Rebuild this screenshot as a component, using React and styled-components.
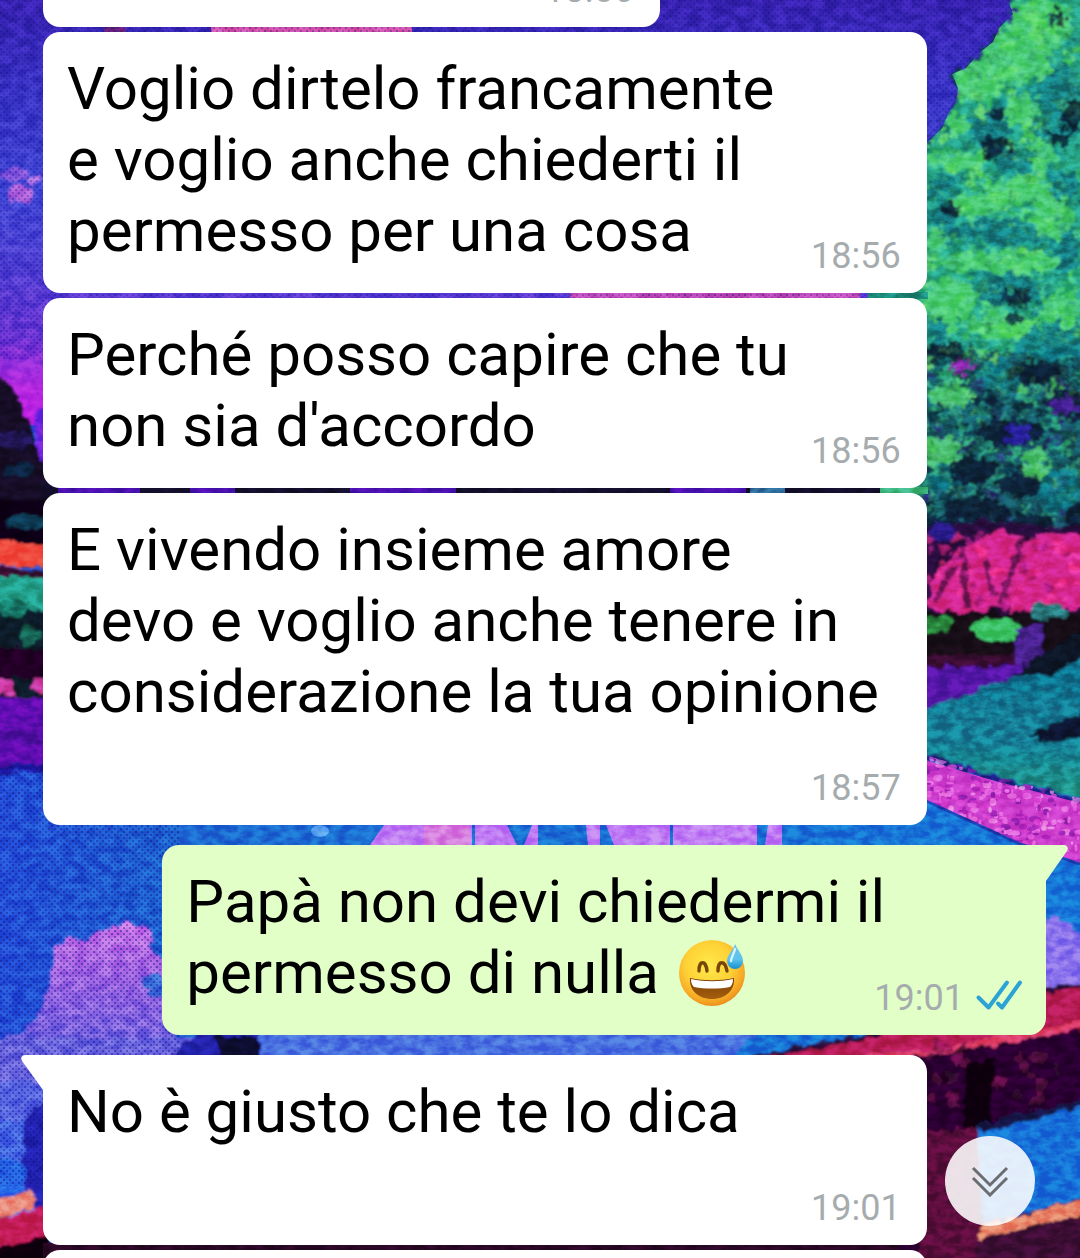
import React from 'react';
import styled, { createGlobalStyle, css } from 'styled-components';

const GlobalStyle = createGlobalStyle`
  * {
    box-sizing: border-box;
  }

  body {
    margin: 0;
    background: #1668d0;
    font-family: Roboto, 'Noto Sans', sans-serif;
  }
`;

const Screen = styled.main`
  position: relative;
  height: 100vh;
  overflow: hidden;
`;

const WallpaperSvg = styled.svg`
  position: absolute;
  inset: 0;
  width: 100%;
  height: 100%;

  .grain {
    mix-blend-mode: overlay;
  }
`;

const Thread = styled.div`
  position: relative;
  display: flex;
  flex-direction: column;
  padding: 0 34px 0 43px;
`;

const Group = styled.div`
  display: flex;
  flex-direction: column;
  gap: 5px;
  margin-bottom: 20px;
`;

// the oldest message is scrolled almost out of view
const ScrolledOut = styled.div`
  display: flex;
  align-items: flex-end;
  height: 27px;
  overflow: hidden;
`;

const Bubble = styled.article`
  position: relative;
  display: grid;
  width: ${({ $short }) => ($short ? '61.5%' : '88.1%')};
  min-height: 119px;
  padding: 21px 26px 16px 24px;
  border-radius: 17px;
  background: #ffffff;

  ${({ $sent }) =>
    $sent &&
    css`
      align-self: flex-end;
      background: #e1ffc7;
    `}

  ${({ $tail, $sent }) =>
    $tail && ($sent ? 'border-top-right-radius: 0;' : 'border-top-left-radius: 0;')}
`;

const Body = styled.p`
  grid-area: 1 / 1;
  justify-self: start;
  margin: 0;
  padding-bottom: 11px;
  font-size: 60px;
  line-height: 71px;
  color: #000000;
`;

const Line = styled.span`
  display: block;
`;

const Meta = styled.div`
  grid-area: ${({ $below }) => ($below ? '2 / 1' : '1 / 1')};
  display: flex;
  align-items: flex-end;
  align-self: end;
  justify-self: end;
  gap: 10px;
  height: ${({ $below }) => ($below ? '71px' : 'auto')};
  font-size: 36px;
  line-height: 42px;
  color: #a6acae;
`;

const Tail = styled.svg`
  position: absolute;
  top: 0;
  width: 23px;
  height: 36px;
  fill: ${({ $sent }) => ($sent ? '#e1ffc7' : '#ffffff')};
  ${({ $sent }) => ($sent ? 'left: calc(100% - 1px);' : 'right: calc(100% - 1px);')}
`;

const Ticks = styled.svg`
  width: 46px;
  height: 42px;
  overflow: visible;
`;

const EmojiSvg = styled.svg`
  width: 67px;
  height: 67px;
  margin-left: 5px;
  vertical-align: -13px;
`;

const ScrollButton = styled.button`
  position: absolute;
  right: 45px;
  bottom: 32px;
  display: flex;
  align-items: center;
  justify-content: center;
  width: 90px;
  height: 90px;
  padding: 0;
  border: none;
  border-radius: 50%;
  background: rgba(255, 255, 255, 0.88);
  cursor: pointer;
`;

const seeded = (seed) => {
  let s = seed;
  return () => {
    s = (s * 16807) % 2147483647;
    return s / 2147483647;
  };
};

// small leaves scattered over an area
const scatter = (seed, count, [x, y, w, h], colors, min, max) => {
  const rnd = seeded(seed);
  return Array.from({ length: count }, (_, i) => ({
    id: i,
    cx: Math.round(x + rnd() * w),
    cy: Math.round(y + rnd() * h),
    rx: min + rnd() * (max - min),
    ry: min + rnd() * (max - min) * 0.7,
    fill: colors[Math.floor(rnd() * colors.length)],
  }));
};

const Specks = ({ items, opacity = 0.7 }) => (
  <g opacity={opacity}>
    {items.map(({ id, ...rest }) => (
      <ellipse key={id} {...rest} />
    ))}
  </g>
);

const upperLeaves = scatter(71, 620, [915, 0, 165, 400], ['#5fe36c', '#3fc878', '#1f9c86', '#2bb482', '#78e860', '#12747f'], 2, 7);
const fineLeaves = scatter(83, 900, [915, 0, 165, 530], ['#86f070', '#3fc878', '#0f5a70', '#2bb482', '#128078', '#0c4058'], 1, 4);
const lowerLeaves = scatter(19, 330, [915, 370, 165, 160], ['#2aa884', '#123c50', '#0b2338', '#3fc07c', '#1c7a80', '#2a2078'], 2, 7);
const pathPetals = scatter(33, 420, [920, 755, 160, 110], ['#f078e8', '#a81cb8', '#e048d8', '#8c1cb0', '#f49ae8'], 1, 5);
const pinkPetals = scatter(45, 90, [927, 535, 153, 75], ['#ff3a9c', '#d82488', '#a01c78', '#f0309a'], 2, 6);
const darkSpecks = scatter(57, 70, [927, 1045, 130, 213], ['#6a1048', '#3a0830', '#12040e', '#8a1458'], 3, 10);

const brights = [
  [1040, 25, 32, 28], [1020, 60, 34, 24], [978, 80, 24, 20], [1000, 48, 22, 14], [1022, 110, 18, 18],
  [957, 125, 12, 10], [1042, 158, 10, 20], [955, 160, 28, 10], [1020, 192, 34, 13], [975, 205, 26, 12],
  [1052, 218, 20, 22], [988, 262, 48, 12], [1040, 262, 20, 10], [950, 300, 26, 24], [1000, 326, 34, 14],
  [1060, 308, 20, 16], [935, 240, 12, 12], [950, 395, 24, 12], [940, 450, 20, 16], [1035, 465, 12, 18],
];
const teals = [
  [1058, 105, 30, 40], [990, 130, 22, 16], [1015, 160, 18, 14], [945, 190, 18, 14], [1062, 190, 18, 20],
  [1000, 232, 44, 14], [942, 225, 16, 20], [1010, 290, 36, 16], [1066, 250, 14, 22], [1052, 345, 34, 22],
  [935, 325, 12, 16], [1000, 375, 24, 14], [1060, 490, 22, 22], [945, 480, 20, 10],
];
const darks = [
  [1057, 18, 8, 9], [1074, 116, 12, 16], [1060, 138, 12, 8], [997, 115, 8, 7], [995, 148, 14, 12],
  [952, 210, 9, 8], [1018, 298, 16, 9], [1014, 318, 7, 9], [940, 352, 30, 10], [1040, 372, 34, 12],
  [984, 398, 12, 7], [1068, 402, 22, 16], [1010, 432, 34, 14], [972, 470, 24, 14], [1020, 486, 24, 12],
  [975, 510, 34, 14], [1025, 522, 30, 8], [1076, 520, 12, 18], [940, 530, 18, 14],
];

const Blobs = ({ items, fill, opacity }) => (
  <g fill={fill} opacity={opacity}>
    {items.map(([cx, cy, rx, ry]) => (
      <ellipse key={`${cx}-${cy}`} cx={cx} cy={cy} rx={rx} ry={ry} />
    ))}
  </g>
);

const Wallpaper = () => (
  <WallpaperSvg viewBox="0 0 1080 1258" preserveAspectRatio="xMidYMid slice" aria-hidden="true">
    <defs>
      <linearGradient id="sky" x1="0" y1="0" x2="0" y2="1">
        <stop offset="0" stopColor="#3a22b4" />
        <stop offset="0.2" stopColor="#3a32c6" />
        <stop offset="0.45" stopColor="#4147d8" />
        <stop offset="0.62" stopColor="#5140d6" />
        <stop offset="0.78" stopColor="#6a34d6" />
        <stop offset="0.9" stopColor="#b428e0" />
        <stop offset="1" stopColor="#c81ee8" />
      </linearGradient>
      <linearGradient id="water" x1="0" y1="0" x2="1" y2="0">
        <stop offset="0" stopColor="#2450dc" />
        <stop offset="0.2" stopColor="#1c6ad2" />
        <stop offset="1" stopColor="#1676d8" />
      </linearGradient>
      <linearGradient id="mountain" x1="0" y1="0" x2="0" y2="1">
        <stop offset="0" stopColor="#cf74ea" />
        <stop offset="0.4" stopColor="#a266e6" />
        <stop offset="1" stopColor="#6a66e4" />
      </linearGradient>
      <linearGradient id="field" x1="0" y1="0" x2="0" y2="1">
        <stop offset="0" stopColor="#11708e" />
        <stop offset="0.6" stopColor="#127f98" />
        <stop offset="1" stopColor="#249886" />
      </linearGradient>
      <pattern id="dither" width="6" height="6" patternUnits="userSpaceOnUse">
        <rect width="2" height="2" fill="#10107c" />
        <rect x="3" y="3" width="2" height="2" fill="#10107c" />
      </pattern>
      <clipPath id="tree">
        <path d="M1008 0l5 14-14 14-6 14-15 12-12 14-14 6 6 14-2 14-8 12-6 14-12 12-15 10v394h168V0z" />
      </clipPath>
      <clipPath id="path">
        <path d="M915 752l80 24 85 22v66l-60-20-105-48z" />
      </clipPath>
      <filter id="rough" x="-5%" y="-5%" width="110%" height="110%">
        <feTurbulence type="fractalNoise" baseFrequency="0.13" numOctaves="4" seed="4" />
        <feDisplacementMap in="SourceGraphic" scale="24" xChannelSelector="R" yChannelSelector="G" />
        <feGaussianBlur stdDeviation="1" />
      </filter>
      <filter id="soft" x="-5%" y="-5%" width="110%" height="110%">
        <feTurbulence type="fractalNoise" baseFrequency="0.09" numOctaves="3" seed="9" />
        <feDisplacementMap in="SourceGraphic" scale="12" xChannelSelector="R" yChannelSelector="G" />
        <feGaussianBlur stdDeviation="1.3" />
      </filter>
      <filter id="noise" x="0" y="0" width="100%" height="100%" colorInterpolationFilters="sRGB">
        <feTurbulence type="fractalNoise" baseFrequency="0.08 0.13" numOctaves="4" seed="12" />
        <feColorMatrix values="2.6 0 0 0 -0.82  2.6 0 0 0 -0.82  2.6 0 0 0 -0.82  0 0 0 0 1" />
      </filter>
    </defs>

    <rect width="1080" height="430" fill="url(#sky)" />
    <rect y="425" width="1080" height="833" fill="url(#water)" />

    {/* clouds and far shore */}
    <path d="M211 24h201v10H211z" fill="#d452ae" />
    <path d="M104 26h22v6h-22z" fill="#6a2080" />
    <path d="M570 290h290v12H570z" fill="#c24cbc" />
    <g filter="url(#soft)">
      <ellipse cx="12" cy="174" rx="15" ry="7" fill="#8a58e0" />
      <ellipse cx="20" cy="194" rx="13" ry="9" fill="#b060dc" />
      <ellipse cx="34" cy="180" rx="8" ry="3" fill="#b070e8" />
      <path d="M36 410h20v70H36z" fill="#7024e0" />
      <path d="M-8 374l14 6 12 16 10 24 8 26 14 30v64H-8z" fill="#120a26" />
      <ellipse cx="12" cy="440" rx="20" ry="9" fill="#241858" />
      <ellipse cx="20" cy="470" rx="16" ry="7" fill="#0c2844" />
    </g>
    <path d="M43 484h884v14H43z" fill="#120e2c" />
    <path d="M58 484h82v14H58zM190 484h45v14h-45zM350 484h106v14H350zM670 484h76v14h-76z" fill="#4a10b0" />
    <path d="M750 484h35v14h-35z" fill="#2c6898" />

    {/* left bank */}
    <g filter="url(#soft)">
      <path d="M-8 500h70v60H-8z" fill="#0a0616" />
      <ellipse cx="26" cy="522" rx="20" ry="7" fill="#103c58" />
      <path d="M-8 540l60 5v24l-60-4z" fill="#f04a3c" />
      <path d="M-8 566l60 6v8l-60-4z" fill="#3a1030" />
      <path d="M-8 574l60 6v44l-60-8z" fill="#22a08c" />
      <path d="M-8 606l60 6v92H-8z" fill="#0c1c2a" />
      <ellipse cx="14" cy="608" rx="16" ry="9" fill="#187868" />
      <ellipse cx="30" cy="636" rx="11" ry="9" fill="#186858" />
      <path d="M-8 648h60v30H-8z" fill="#220626" />
      <path d="M-8 679l22 2v14l-22-3zM34 678h18v14l-20-2z" fill="#d03ca8" />
      <path d="M-8 697h60v68l-60 6z" fill="#6410b4" />
      <path d="M-8 730h60v14H-8z" fill="#500ca0" />
      <path d="M-8 766l60-4v8l-60 4z" fill="#1e18a0" />
    </g>

    {/* reflections on the water */}
    <g fill="#bf7af4">
      <path d="M384 825h88v20H370zM475 825h32l10 20h-42zM532 825h6v20h-14zM586 825h14v20h-12zM606 825h64v20h-56zM673 825h84v20h-84zM768 825h14v20h-17z" />
    </g>
    <path d="M424 825h46v20h-46z" fill="#d67adf" />
    <ellipse cx="320" cy="831" rx="9" ry="6" fill="#5aa4f0" />

    <g filter="url(#soft)">
      <path d="M-8 1037l30-4 18-20 8-30 7-36 14-10 12 6 22-15 22-6 24 6 6 26 20 20v90H-8z" fill="url(#mountain)" />
      <path d="M140 980l14-10 14 16v16l-20-6z" fill="#3a6edc" />
      <path d="M-8 1037h230v50H-8z" fill="#6c66e2" />
      <path d="M-8 1082h60v60H-8z" fill="#5a68e6" />
      <path d="M-8 1120h60v100H-8z" fill="#4468e8" />
      <path d="M-8 1160h34v50H-8z" fill="#2868e8" />
      <path d="M170 1060l12-16 24-14h54v30z" fill="#2420ac" />
      <path d="M214 1036h44v24h-38z" fill="#0a0830" />
      <path d="M260 1030h500l-30 30H260z" fill="#4870e0" />
      <path d="M50 1096l-16 12-10 22-2 26 6 36 8 24 16 8z" fill="#2424b4" />
      <path d="M-8 1200l40-10 3 18-43 10z" fill="#eb8878" />
      <path d="M-8 1218l60-10v34l-60 8z" fill="#c41c58" />
      <path d="M-8 1250l60-16v30H-8z" fill="#10040e" />
    </g>
    <path d="M43 1243h884v15H43z" fill="#2a0826" />

    {/* dithering of the sky and the water */}
    <rect width="1080" height="360" fill="url(#dither)" opacity="0.28" />
    <rect y="766" width="180" height="420" fill="url(#dither)" opacity="0.4" />

    {/* tree */}
    <path d="M1008 0l5 14-14 14-6 14-15 12-12 14-14 6 6 14-2 14-8 12-6 14-12 12-15 10v394h168V0z" fill="#123a66" filter="url(#rough)" />
    <g clipPath="url(#tree)">
      <g filter="url(#rough)">
        <path d="M1014-18v32l-14 14-6 14-15 12-12 14-14 6 6 14-2 14-8 12-6 14-12 12-22 10v440h200V-18z" fill="#25a488" />
        <path d="M905 350h195v200H905z" fill="#165a68" />
        <Specks items={upperLeaves} opacity={0.7} />
        <Specks items={lowerLeaves} opacity={0.8} />
        <Blobs items={teals} fill="#117684" opacity={0.8} />
        <Blobs items={brights} fill="#56d870" opacity={0.8} />
        <Specks items={fineLeaves} opacity={0.4} />
        <Blobs items={darks} fill="#0c1830" opacity={0.85} />
        <Specks items={upperLeaves} opacity={0.2} />
        <ellipse cx="962" cy="366" rx="9" ry="8" fill="#8a28b0" />
        <ellipse cx="1064" cy="406" rx="13" ry="8" fill="#4a209c" />
        <ellipse cx="1018" cy="434" rx="13" ry="9" fill="#2c20a4" />
      </g>
    </g>
    <path d="M868 292h60v7h-60z" fill="#1c8c7c" />
    <path d="M880 487h48v7h-48z" fill="#3cb47c" />

    {/* right bank */}
    <g filter="url(#soft)">
      <path d="M920 528l60-8 110 8v140H920z" fill="#2c1040" />
      <ellipse cx="942" cy="532" rx="14" ry="9" fill="#2a1c90" />
      <path d="M927 606l8-32 22-24 30-16 18-6 16 16 14-10h54v74l-60 4-30-4-40 8z" fill="#d4288c" />
      <Specks items={pinkPetals} opacity={0.7} />
      <path d="M1022 538l-8 30-14 34M962 548l6 60M985 560l8 36M935 600l20-34" stroke="#5c104e" strokeWidth="6" fill="none" opacity="0.8" />
      <path d="M920 612h170v54H920z" fill="#120a16" />
      <path d="M920 655h100v12H920z" fill="#3c1034" />
      <ellipse cx="996" cy="629" rx="24" ry="12" fill="#3cc468" />
      <ellipse cx="935" cy="624" rx="18" ry="9" fill="#2c8c40" />
      <ellipse cx="1048" cy="612" rx="18" ry="9" fill="#2c7c80" />
      <path d="M1016 630l26-8v46l-26 4z" fill="#4a2090" />
      <path d="M920 668l108-3-28 22-80 24z" fill="#5414a8" />
      <path d="M920 712l90-34 50-10 30-18v150l-170-44z" fill="url(#field)" />
      <path d="M1010 676l38-26 42-22v24l-40 22z" fill="#0c1428" />
      <path d="M1030 736l30-16 30-8v26l-44 6z" fill="#0a1430" />
      <path d="M920 750l78 26 92 26v8l-92-26-78-26z" fill="#1c1c80" />
    </g>
    <g clipPath="url(#path)">
      <path d="M915 757l80 24 85 22v70H915z" fill="#cc3ccc" />
      <Specks items={pathPetals} opacity={0.7} />
    </g>
    <path d="M924 800l96 44 60 20" stroke="#1c3cb0" strokeWidth="3" fill="none" />
    <g filter="url(#soft)">
      <path d="M1040 916l20 2 30 22v44l-50 10z" fill="#8870ec" />
      <path d="M740 1062l120-24 180-46 50-12v60l-170 24z" fill="#b81c56" />
      <path d="M730 1062l150-28 160-43 50-8" stroke="#2c0c3c" strokeWidth="4" fill="none" />
      <path d="M800 1062l140-14 150-30v8l-140 34z" fill="#e0406c" />
      <path d="M900 1060l190-31v240H900z" fill="#2a0630" />
      <Specks items={darkSpecks} opacity={0.6} />
      <path d="M966 1064l30-6-6 66-28 12z" fill="#0a040c" />
      <path d="M920 1130h60v140h-60z" fill="#5c103e" />
      <path d="M978 1128l112-28v96l-108 28z" fill="#1470d8" />
      <path d="M978 1124l112-26v6l-110 28z" fill="#141448" />
      <path d="M980 1226l110-28v14l-112 28z" fill="#e88468" />
      <path d="M976 1240l114-28v60H976z" fill="#3c0c34" />
    </g>

    <rect className="grain" width="1080" height="1258" filter="url(#noise)" opacity="0.22" />
  </WallpaperSvg>
);

const SweatEmoji = () => (
  <EmojiSvg viewBox="0 0 67 67" role="img" aria-label="😅">
    <defs>
      <radialGradient id="face" cx="0.45" cy="0.38" r="0.64">
        <stop offset="0" stopColor="#ffe94a" />
        <stop offset="0.55" stopColor="#fed136" />
        <stop offset="0.85" stopColor="#f6a724" />
        <stop offset="1" stopColor="#e98b1c" />
      </radialGradient>
      <linearGradient id="drop" x1="0" y1="0" x2="0" y2="1">
        <stop offset="0" stopColor="#6cc0e6" />
        <stop offset="0.6" stopColor="#5cc4ee" />
        <stop offset="1" stopColor="#168fd2" />
      </linearGradient>
      <linearGradient id="mouth" x1="0" y1="0" x2="0" y2="1">
        <stop offset="0" stopColor="#7c3c08" />
        <stop offset="1" stopColor="#a4600c" />
      </linearGradient>
    </defs>
    <circle cx="33" cy="34" r="33" fill="url(#face)" />
    <path d="M20 32c0-11 7-11 8 0M39 32c0-11 7-11 9 0" fill="none" stroke="#7a4508" strokeWidth="3.4" strokeLinecap="round" />
    <path d="M11 39c14 3 30 3 44 0 1 12-8 21-22 21S10 51 11 39z" fill="url(#mouth)" />
    <path d="M12 40c14 3 28 3 42 0 0 4-1 6-3 8-11 2-25 2-36 0-2-2-3-4-3-8z" fill="#ffffff" />
    <path d="M56 5c3 7 8 11 8 17a8 8 0 0 1-16 0c0-6 6-10 8-17z" fill="url(#drop)" />
    <path d="M56 10c-1 5-4 8-4 12" stroke="#d4f4ff" strokeWidth="2.4" strokeLinecap="round" fill="none" />
  </EmojiSvg>
);

const ReadTicks = () => (
  <Ticks viewBox="0 0 46 42" role="img" aria-label="Letto">
    <path d="M4.5 20.5l10 10L33 5.5M24 26.5l4 4L46 5.5" fill="none" stroke="#2ba3d4" strokeWidth="4" strokeLinejoin="round" strokeLinecap="round" />
  </Ticks>
);

const Message = ({ time, lines, emoji, sent, tail, below, short }) => (
  <Bubble $sent={sent} $tail={tail} $short={short}>
    {tail && (
      <Tail $sent={sent} viewBox="0 0 23 36" aria-hidden="true">
        <path d={sent ? 'M0 0h19c3 0 5 3 3 6L1 36H0z' : 'M23 0H4C1 0-1 3 1 6l21 29h1z'} />
      </Tail>
    )}
    {lines && (
      <Body>
        {lines.map((line, i) => (
          <Line key={line}>
            {line} {emoji && i === lines.length - 1 && <SweatEmoji />}
          </Line>
        ))}
      </Body>
    )}
    {time && (
      <Meta $below={below}>
        <time>{time}</time>
        {sent && <ReadTicks />}
      </Meta>
    )}
  </Bubble>
);

const App = () => (
  <>
    <GlobalStyle />
    <Screen>
      <Wallpaper />

      <Thread>
        <Group>
          <ScrolledOut>
            <Message time="18:56" short />
          </ScrolledOut>
          <Message
            time="18:56"
            lines={['Voglio dirtelo francamente', 'e voglio anche chiederti il', 'permesso per una cosa']}
          />
          <Message time="18:56" lines={['Perché posso capire che tu', "non sia d'accordo"]} />
          <Message
            time="18:57"
            lines={['E vivendo insieme amore', 'devo e voglio anche tenere in', 'considerazione la tua opinione']}
            below
          />
        </Group>

        <Group>
          <Message time="19:01" lines={['Papà non devi chiedermi il', 'permesso di nulla']} emoji sent tail />
        </Group>

        <Group>
          <Message time="19:01" lines={['No è giusto che te lo dica']} tail below />
          <Message />
        </Group>
      </Thread>

      <ScrollButton type="button" aria-label="Vai in fondo alla chat">
        <svg width="38" height="32" viewBox="0 0 38 32" fill="none" stroke="#6b6d70" strokeWidth="3" aria-hidden="true">
          <path d="M2 3l17 17L36 3M2 13l17 17 17-17" />
        </svg>
      </ScrollButton>
    </Screen>
  </>
);

export default App;
